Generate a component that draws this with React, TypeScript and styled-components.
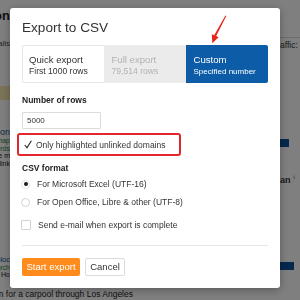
import React from 'react'
import styled, { createGlobalStyle } from 'styled-components'

const GlobalStyle = createGlobalStyle`
  html, body {
    margin: 0;
    padding: 0;
    background: #ffffff;
  }
  body {
    font-family: "Liberation Sans", Arial, sans-serif;
    color: #333;
  }
  * {
    box-sizing: border-box;
  }
`

// page behind the dialog
const Page = styled.div`
  width: 300px;
  height: 300px;
  overflow: hidden;
  display: grid;
  grid-template-columns: 10px 1fr 20px;
`

const SideColumn = styled.div`
  display: flex;
  flex-direction: column;
  min-width: 0;
`

const PageText = styled.div<{
  $mt: number
  $w?: number
  $size: number
  $lh: number
  $color?: string
  $bold?: boolean
  $start?: boolean
}>`
  margin-top: ${(p) => p.$mt}px;
  width: ${(p) => p.$w ?? 10}px;
  display: flex;
  justify-content: ${(p) => (p.$start ? 'flex-start' : 'flex-end')};
  overflow: hidden;
  white-space: nowrap;
  font-size: ${(p) => p.$size}px;
  line-height: ${(p) => p.$lh}px;
  color: ${(p) => p.$color ?? '#222'};
  font-weight: ${(p) => (p.$bold ? 'bold' : 'normal')};
`

const Band = styled.div<{ $mt: number; $h: number; $w: number; $color: string }>`
  margin-top: ${(p) => p.$mt}px;
  height: ${(p) => p.$h}px;
  width: ${(p) => p.$w}px;
  background: ${(p) => p.$color};
`

const Sup = styled.span`
  font-size: 5px;
  line-height: 5px;
  margin-left: 3px;
  font-weight: normal;
`

const Overlay = styled.div`
  position: fixed;
  inset: 0;
  background: rgba(0, 0, 0, 0.5);
`

const Modal = styled.div`
  position: fixed;
  left: 10px;
  top: 8px;
  width: 270px;
  height: 280px;
  background: #fff;
  border-radius: 3px;
  box-shadow: 0 2px 8px rgba(0, 0, 0, 0.3);
  padding: 12px 12px;
  display: flex;
  flex-direction: column;
`

const Title = styled.h2`
  margin: 0;
  font-size: 13.6px;
  line-height: 16px;
  font-weight: normal;
  color: #333;
`

const Tabs = styled.div`
  margin-top: 9px;
  height: 38px;
  display: grid;
  grid-template-columns: repeat(3, 1fr);
`

type TabKind = 'quick' | 'full' | 'custom'

const Tab = styled.div<{ $kind: TabKind }>`
  padding: 8.5px 7px 0;
  background: ${(p) =>
    p.$kind === 'custom' ? '#0c5ca8' : p.$kind === 'full' ? '#ebebeb' : '#fff'};
  color: ${(p) =>
    p.$kind === 'custom' ? '#fff' : p.$kind === 'full' ? '#b3b3b3' : '#333'};
  border: ${(p) => (p.$kind === 'quick' ? '1px solid #e6e6e6' : 'none')};
  border-right: none;
  border-radius: ${(p) =>
    p.$kind === 'quick' ? '2px 0 0 2px' : p.$kind === 'custom' ? '0 2px 2px 0' : '0'};
  padding-top: ${(p) => (p.$kind === 'quick' ? '7.5px' : '8.5px')};
  padding-left: ${(p) => (p.$kind === 'quick' ? '6px' : '7.5px')};
`

const TabTitle = styled.div`
  font-size: 9.6px;
  line-height: 12px;
`

const TabSub = styled.div<{ $size?: number }>`
  font-size: ${(p) => p.$size ?? 8.6}px;
  line-height: 11px;
`

const FieldLabel = styled.div<{ $mt: number }>`
  margin-top: ${(p) => p.$mt}px;
  font-size: 8.5px;
  line-height: 11px;
  font-weight: bold;
  color: #222;
`

const RowsInput = styled.input`
  margin-top: 5.5px;
  width: 79px;
  height: 17px;
  border: 1px solid #dcdcdc;
  border-radius: 1px;
  padding: 0 4px;
  font-family: "Liberation Sans", Arial, sans-serif;
  font-size: 8px;
  color: #333;
  outline: none;
`

const HighlightRow = styled.div`
  margin-top: 4px;
  margin-left: -5px;
  width: 164px;
  height: 24px;
  border: 2px solid #e2262b;
  border-radius: 3px;
  padding-left: 5px;
  display: flex;
  align-items: center;
  gap: 4px;
  font-size: 8.5px;
  color: #333;
`

const OptionRow = styled.div<{ $mt?: number }>`
  margin-top: ${(p) => p.$mt ?? 0}px;
  margin-left: -1px;
  height: 18px;
  display: flex;
  align-items: center;
  gap: 7px;
  font-size: 8.5px;
  color: #333;
`

const Radio = styled.span<{ $checked?: boolean }>`
  width: 9px;
  height: 9px;
  border-radius: 50%;
  border: 1px solid ${(p) => (p.$checked ? '#e4e4e4' : '#d2d2d2')};
  display: flex;
  align-items: center;
  justify-content: center;
  &::after {
    content: '';
    width: 4px;
    height: 4px;
    border-radius: 50%;
    background: ${(p) => (p.$checked ? '#1a1a1a' : 'transparent')};
  }
`

const Checkbox = styled.span`
  width: 10px;
  height: 10px;
  border: 1px solid #d2d2d2;
  border-radius: 1px;
`

const Divider = styled.div`
  margin-top: 11px;
  height: 1px;
  background: #e6e6e6;
`

const Actions = styled.div`
  margin-top: 12px;
  display: flex;
  gap: 5px;
`

const Button = styled.button<{ $primary?: boolean }>`
  height: 18px;
  width: ${(p) => (p.$primary ? 58 : 40)}px;
  padding: 0;
  border-radius: 2px;
  border: ${(p) => (p.$primary ? 'none' : '1px solid #dcdcdc')};
  background: ${(p) => (p.$primary ? '#ff8b1c' : '#fff')};
  color: ${(p) => (p.$primary ? '#fff' : '#333')};
  font-family: "Liberation Sans", Arial, sans-serif;
  font-size: 9.5px;
`

const Annotation = styled.svg`
  position: fixed;
  left: 0;
  top: 0;
  width: 300px;
  height: 300px;
  pointer-events: none;
`

const CheckMark = () => (
  <svg width="8" height="9" viewBox="0 0 8 9">
    <path d="M0.8 5 L3 7.8 L7.4 0.8" fill="none" stroke="#222" strokeWidth="1.1" />
  </svg>
)

export default function App() {
  return (
    <>
      <GlobalStyle />
      <Page>
        <SideColumn>
          <PageText $mt={9} $size={13} $lh={14} $bold>
            Location
          </PageText>
          <PageText $mt={16} $size={8} $lh={10} $color="#444">
            Details
          </PageText>
          <Band $mt={37} $h={14} $w={10} $color="#f6e7b0" />
          <PageText $mt={28} $size={9} $lh={9} $color="#1d4f91">
            Option
          </PageText>
          <PageText $mt={0} $size={7} $lh={7.5} $color="#2e7d32">
            Roadmap
          </PageText>
          <PageText $mt={0} $size={7} $lh={7.5} $color="#2e7d32">
            keywords
          </PageText>
          <PageText $mt={0} $size={7} $lh={7.5}>
            same m
          </PageText>
          <PageText $mt={0} $size={7} $lh={7.5}>
            link
          </PageText>
          <PageText $mt={88.5} $size={7.5} $lh={8} $color="#1d4f91">
            Carpooloc
          </PageText>
          <PageText $mt={0} $size={7} $lh={7.5} $color="#2e7d32">
            search
          </PageText>
          <PageText $mt={0} $size={7} $lh={7.5}>
            Ho
          </PageText>
          <PageText $mt={10} $w={133} $size={8.5} $lh={10}>
            Plan for a carpool through Los Angeles
          </PageText>
        </SideColumn>
        <div />
        <SideColumn>
          <Band $mt={37} $h={1} $w={20} $color="#d8d8d8" />
          <PageText $mt={2} $w={20} $size={8.5} $lh={10} $start $color="#333">
            affic:
          </PageText>
          <Band $mt={89} $h={8} $w={9} $color="#0c4f9c" />
          <PageText $mt={28} $w={20} $size={9} $lh={10} $start $bold $color="#333">
            an<Sup>i</Sup>
          </PageText>
          <Band $mt={77} $h={8} $w={14} $color="#0c4f9c" />
        </SideColumn>
      </Page>
      <Overlay />
      <Modal>
        <Title>Export to CSV</Title>
        <Tabs>
          <Tab $kind="quick">
            <TabTitle>Quick export</TabTitle>
            <TabSub>First 1000 rows</TabSub>
          </Tab>
          <Tab $kind="full">
            <TabTitle>Full export</TabTitle>
            <TabSub>79,514 rows</TabSub>
          </Tab>
          <Tab $kind="custom">
            <TabTitle>Custom</TabTitle>
            <TabSub $size={8}>Specified number</TabSub>
          </Tab>
        </Tabs>
        <FieldLabel $mt={12.5}>Number of rows</FieldLabel>
        <RowsInput defaultValue="5000" />
        <HighlightRow>
          <CheckMark />
          <span>Only highlighted unlinked domains</span>
        </HighlightRow>
        <FieldLabel $mt={6.5}>CSV format</FieldLabel>
        <OptionRow $mt={1.5}>
          <Radio $checked />
          <span>For Microsoft Excel (UTF-16)</span>
        </OptionRow>
        <OptionRow>
          <Radio />
          <span>For Open Office, Libre &amp; other (UTF-8)</span>
        </OptionRow>
        <OptionRow $mt={5}>
          <Checkbox />
          <span>Send e-mail when export is complete</span>
        </OptionRow>
        <Divider />
        <Actions>
          <Button $primary>Start export</Button>
          <Button>Cancel</Button>
        </Actions>
      </Modal>
      <Annotation viewBox="0 0 300 300">
        <polygon
          points="225.4,15.6 226.3,16 216.2,36.1 218.6,37.2 212.3,43.3 211.8,34.2 214.2,35.2"
          fill="#e8261c"
        />
      </Annotation>
    </>
  )
}
